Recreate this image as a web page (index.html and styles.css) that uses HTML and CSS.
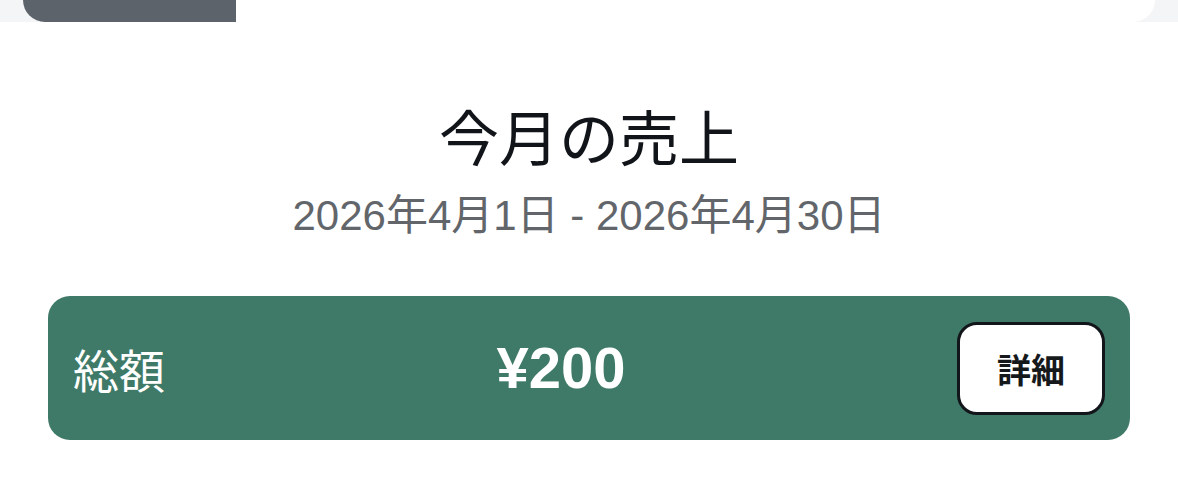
FILE: index.html
```html
<!DOCTYPE html>
<html lang="ja">
<head>
<meta charset="utf-8">
<link rel="stylesheet" href="styles.css">
</head>
<body>
<div class="topbar">
  <div class="tabs">
    <div class="tab-active"></div>
  </div>
</div>
<main class="main">
  <h1 class="title">今月の売上</h1>
  <p class="period">2026年4月1日 - 2026年4月30日</p>
  <section class="total">
    <span class="total-label">総額</span>
    <span class="total-amount">¥200</span>
    <button class="detail-btn">詳細</button>
  </section>
</main>
</body>
</html>
```
FILE: styles.css
```css
* { box-sizing: border-box; }
html, body { margin: 0; padding: 0; background: #ffffff; }
body {
  font-family: "Liberation Sans", "Noto Sans CJK JP", sans-serif;
  width: 1178px;
  height: 486px;
  overflow: hidden;
}
.topbar {
  background: #f4f5f7;
  height: 22px;
  padding: 0 23px;
}
.tabs {
  height: 22px;
  background: #ffffff;
  border-radius: 0 0 24px 24px;
  overflow: hidden;
  display: flex;
}
.tab-active {
  width: 213px;
  height: 100%;
  background: #5c636a;
}
.main {
  padding: 0 48px;
  display: flex;
  flex-direction: column;
  align-items: center;
}
.title {
  margin: 76px 0 0;
  font-size: 60px;
  line-height: 74px;
  font-weight: 400;
  color: #111418;
  font-family: "Noto Sans CJK JP", sans-serif;
}
.period {
  margin: 18px 0 0;
  font-size: 42px;
  line-height: 52px;
  color: #62666b;
}
.total {
  margin-top: 54px;
  align-self: stretch;
  height: 144px;
  background: #3f7a68;
  border-radius: 22px;
  display: flex;
  align-items: center;
  justify-content: space-between;
  padding: 0 25px 0 25px;
  color: #ffffff;
}
.total-label {
  font-family: "Noto Sans CJK JP", sans-serif;
  font-size: 46px;
  line-height: 1;
}
.total-amount {
  font-size: 58px;
  font-weight: 700;
  line-height: 1;
}
.detail-btn {
  width: 148px;
  height: 93px;
  background: #ffffff;
  border: 3px solid #12161a;
  border-radius: 20px;
  font-family: "Noto Sans CJK JP", sans-serif;
  font-size: 34px;
  font-weight: 700;
  color: #16191c;
  padding: 0;
}
```
